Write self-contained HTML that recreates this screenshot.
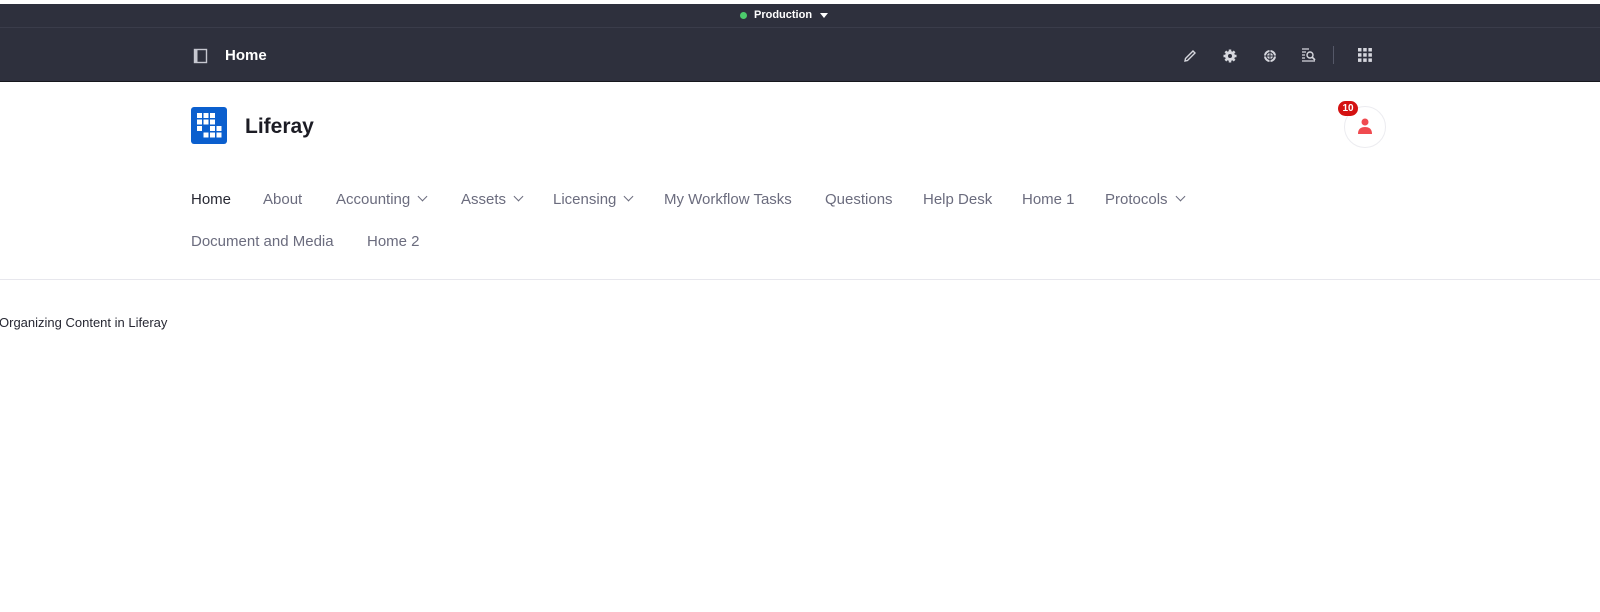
<!DOCTYPE html>
<html><head><style>
body{margin:0;width:1600px;height:612px;background:#fff;font-family:"Liberation Sans",sans-serif;position:relative;overflow:hidden}
.a{position:absolute}
.nav{position:absolute;font-size:15px;color:#6b6c7e;white-space:nowrap}
.chev{display:inline-block;width:6px;height:6px;border-right:1.2px solid #6b6c7e;border-bottom:1.2px solid #6b6c7e;transform:rotate(45deg);margin-left:9px;position:relative;top:-4px}
</style></head><body>
<div class="a" style="left:0;top:4px;width:1600px;height:78px;background:#2e303d"></div>
<div class="a" style="left:0;top:27px;width:1600px;height:1px;background:#3a3c4a"></div>
<div class="a" style="left:0;top:81px;width:1600px;height:1px;background:#16171d"></div>
<div class="a" style="left:740px;top:12px;width:7px;height:7px;border-radius:50%;background:#4ccb6c"></div>
<div class="a" style="left:754px;top:9px;font-size:11px;font-weight:bold;color:#fff">Production</div>
<div class="a" style="left:820px;top:13px;width:0;height:0;border-left:4px solid transparent;border-right:4px solid transparent;border-top:5px solid #fff"></div>
<svg class="a" style="left:193px;top:48px" width="16" height="16" viewBox="0 0 16 16"><rect x="1.5" y="1.5" width="12" height="13" fill="none" stroke="#c6c7d0" stroke-width="1.4"/><rect x="1.5" y="1.5" width="3" height="13" fill="#c6c7d0"/></svg>
<div class="a" style="left:225px;top:47px;font-size:15px;font-weight:bold;color:#fff">Home</div>
<svg class="a" style="left:1182px;top:48px" width="16" height="16" viewBox="0 0 16 16"><path d="M3 13 L3.5 10.5 L11 3 L13 5 L5.5 12.5 Z" fill="none" stroke="#d6d7de" stroke-width="1.4"/></svg>
<svg class="a" style="left:1222px;top:48px" width="16" height="16" viewBox="0 0 16 16"><circle cx="8" cy="8" r="5" fill="#d6d7de"/><g stroke="#d6d7de" stroke-width="2.5"><path d="M8 1.5V14.5M1.5 8H14.5M3.4 3.4L12.6 12.6M12.6 3.4L3.4 12.6"/></g><circle cx="8" cy="8" r="2" fill="#2e303d"/></svg>
<svg class="a" style="left:1262px;top:48px" width="16" height="16" viewBox="0 0 16 16"><circle cx="8" cy="8" r="6" fill="#d6d7de"/><circle cx="8" cy="8" r="3.5" fill="none" stroke="#2e303d" stroke-width="1"/><path d="M8 2V14M2 8H14" stroke="#2e303d" stroke-width="1"/></svg>
<svg class="a" style="left:1301px;top:47px" width="17" height="17" viewBox="0 0 17 17"><path d="M1 2H8M1 5H5M1 8H4M1 11H4M1 14H14" stroke="#d6d7de" stroke-width="1.3"/><circle cx="9" cy="8" r="3" fill="none" stroke="#d6d7de" stroke-width="1.4"/><path d="M11 10L14 13" stroke="#d6d7de" stroke-width="1.6"/></svg>
<div class="a" style="left:1333px;top:46px;width:1px;height:18px;background:#555868"></div>
<svg class="a" style="left:1358px;top:48px" width="14" height="14" viewBox="0 0 14 14" fill="#d6d7de"><rect x="0" y="0" width="3.5" height="3.5"/><rect x="5.2" y="0" width="3.5" height="3.5"/><rect x="10.4" y="0" width="3.5" height="3.5"/><rect x="0" y="5.2" width="3.5" height="3.5"/><rect x="5.2" y="5.2" width="3.5" height="3.5"/><rect x="10.4" y="5.2" width="3.5" height="3.5"/><rect x="0" y="10.4" width="3.5" height="3.5"/><rect x="5.2" y="10.4" width="3.5" height="3.5"/><rect x="10.4" y="10.4" width="3.5" height="3.5"/></svg>
<svg class="a" style="left:191px;top:107px" width="36" height="37" viewBox="0 0 36 37"><rect width="36" height="37" rx="3" fill="#0b5fce"/><g fill="#fff"><rect x="6" y="6" width="5" height="5"/><rect x="12.5" y="6" width="5" height="5"/><rect x="19" y="6" width="5" height="5"/><rect x="6" y="12.5" width="5" height="5"/><rect x="12.5" y="12.5" width="5" height="5"/><rect x="19" y="12.5" width="5" height="5"/><rect x="6" y="19" width="5" height="5"/><rect x="19" y="19" width="5" height="5"/><rect x="25.5" y="19" width="5" height="5"/><rect x="12.5" y="25.5" width="5" height="5"/><rect x="19" y="25.5" width="5" height="5"/><rect x="25.5" y="25.5" width="5" height="5"/></g></svg>
<div class="a" style="left:245px;top:115px;font-size:21px;font-weight:bold;color:#1c1c24">Liferay</div>
<div class="a" style="left:1344px;top:106px;width:40px;height:40px;border-radius:50%;border:1px solid #ececf0;background:#fff"></div>
<svg class="a" style="left:1355px;top:116px" width="20" height="20" viewBox="0 0 20 20" fill="#f04a4f"><circle cx="10" cy="6" r="3.5"/><path d="M3 18 Q3 11 10 11 Q17 11 17 18 Z"/></svg>
<div class="a" style="left:1338px;top:101px;width:20px;height:15px;border-radius:8px;background:#d41212;color:#fff;font-size:10px;font-weight:bold;text-align:center;line-height:15px">10</div>
<div class="nav" style="left:191px;top:191px;color:#272833">Home</div>
<div class="nav" style="left:263px;top:191px">About</div>
<div class="nav" style="left:336px;top:191px">Accounting<span class="chev"></span></div>
<div class="nav" style="left:461px;top:191px">Assets<span class="chev"></span></div>
<div class="nav" style="left:553px;top:191px">Licensing<span class="chev"></span></div>
<div class="nav" style="left:664px;top:191px">My Workflow Tasks</div>
<div class="nav" style="left:825px;top:191px">Questions</div>
<div class="nav" style="left:923px;top:191px">Help Desk</div>
<div class="nav" style="left:1022px;top:191px">Home 1</div>
<div class="nav" style="left:1105px;top:191px">Protocols<span class="chev"></span></div>
<div class="nav" style="left:191px;top:233px">Document and Media</div>
<div class="nav" style="left:367px;top:233px">Home 2</div>
<div class="a" style="left:0;top:279px;width:1600px;height:1px;background:#e7e7ed"></div>
<div class="a" style="left:-1px;top:315px;font-size:13px;color:#272833">Organizing Content in Liferay</div>
</body></html>
